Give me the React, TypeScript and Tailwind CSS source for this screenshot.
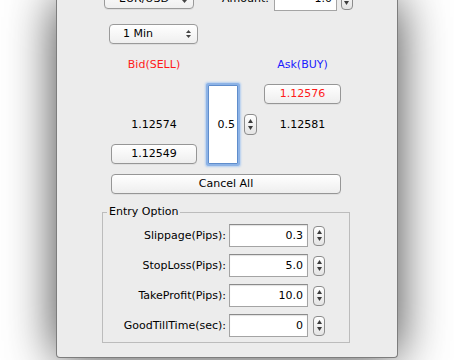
import React from "react";

const Stepper = ({ h = 20, w = 12 }: { h?: number; w?: number }) => (
  <div
    className="shrink-0 rounded-[4px] border border-[#8c8c8c] bg-gradient-to-b from-white to-[#e4e4e4] flex flex-col items-center justify-center gap-[3px]"
    style={{ width: w, height: h }}
  >
    <svg width="5" height="4" viewBox="0 0 5 4">
      <path d="M2.5 0 L5 4 L0 4Z" fill="#3c3c3c" />
    </svg>
    <svg width="5" height="4" viewBox="0 0 5 4">
      <path d="M0 0 L5 0 L2.5 4Z" fill="#3c3c3c" />
    </svg>
  </div>
);

const Combo = ({ label, w, pl }: { label: string; w: number; pl: number }) => (
  <div
    className="h-[20px] rounded-[4px] border border-[#9a9a9a] bg-gradient-to-b from-white to-[#efefef] flex items-center shadow-[0_1px_0_rgba(0,0,0,0.06)]"
    style={{ width: w }}
  >
    <span className="flex-1 leading-[14px]" style={{ paddingLeft: pl }}>
      {label}
    </span>
    <div className="flex flex-col items-center gap-[2px] mr-[6px]">
      <svg width="5" height="3" viewBox="0 0 5 3">
        <path d="M2.5 0 L5 3 L0 3Z" fill="#444" />
      </svg>
      <svg width="5" height="3" viewBox="0 0 5 3">
        <path d="M0 0 L5 0 L2.5 3Z" fill="#444" />
      </svg>
    </div>
  </div>
);

const Button = ({
  label,
  w,
  red,
}: {
  label: string;
  w: number;
  red?: boolean;
}) => (
  <div
    className={
      "h-[20px] rounded-[4px] border border-[#969696] bg-gradient-to-b from-white to-[#eeeeee] flex items-center justify-center leading-[14px] shadow-[0_1px_0_rgba(0,0,0,0.05)] " +
      (red ? "text-[#ff1a1a]" : "text-black")
    }
    style={{ width: w }}
  >
    {label}
  </div>
);

const Field = ({ value }: { value: string }) => (
  <div className="w-[79px] h-[23px] bg-white border border-[#a4a4a4] border-t-[#8a8a8a] shadow-[inset_0_1px_1px_rgba(0,0,0,0.12)] flex items-center justify-end pr-[4px] leading-[14px]">
    {value}
  </div>
);

const Row = ({ label, value }: { label: string; value: string }) => (
  <div className="flex items-center h-[23px]">
    <div className="w-[123px] text-right leading-[14px]">{label}</div>
    <div className="ml-[3px]">
      <Field value={value} />
    </div>
    <div className="ml-[5px]">
      <Stepper h={20} />
    </div>
  </div>
);

export default function App() {
  return (
    <div
      className="w-[454px] h-[360px] overflow-hidden bg-white text-[11px] text-black"
      style={{ fontFamily: '"DejaVu Sans", "Liberation Sans", sans-serif' }}
    >
      <div className="ml-[56px] w-[342px] h-[358px] bg-[#ececec] border border-t-0 border-[#7d7d7d] rounded-b-[4px] shadow-[0_0_50px_rgba(0,0,0,0.75)] flex flex-col">
        {/* top row (cut off) */}
        <div className="flex items-center h-[24px] -mt-[13px]">
          <div className="ml-[47px]">
            <Combo label="EUR/USD" w={90} pl={14} />
          </div>
          <div className="ml-[28px] leading-[14px]">Amount:</div>
          <div className="ml-[5px] w-[63px] h-[23px] bg-white border border-[#a4a4a4] flex items-center justify-end pr-[4px] leading-[14px]">
            1.0
          </div>
          <div className="ml-[4px]">
            <Stepper h={22} />
          </div>
        </div>

        {/* 1 Min */}
        <div className="flex mt-[13px]">
          <div className="ml-[52px]">
            <Combo label="1 Min" w={89} pl={13} />
          </div>
        </div>

        {/* Bid / Ask labels */}
        <div className="flex mt-[14px] h-[14px] leading-[14px]">
          <div className="ml-[54px] w-[86px] text-center text-[#ff1a1a]">Bid(SELL)</div>
          <div className="ml-[67px] w-[77px] text-center text-[#1a1aff]">Ask(BUY)</div>
        </div>

        {/* middle block */}
        <div className="flex mt-[10px] h-[85px]">
          <div className="ml-[54px] w-[86px] flex flex-col items-center">
            <div className="mt-[36px] h-[14px] leading-[14px]">1.12574</div>
            <div className="mt-[12px]">
              <Button label="1.12549" w={86} />
            </div>
          </div>
          <div className="ml-[11px] mt-[3px] w-[30px] h-[79px] bg-white border border-[#5f8dcc] shadow-[0_0_0_2px_#8db3e6,0_0_2px_3px_#b4cff0] rounded-[1px] flex items-center justify-end pr-[2px] leading-[14px]">
            0.5
          </div>
          <div className="ml-[6px] mt-[32px]">
            <Stepper h={21} w={13} />
          </div>
          <div className="ml-[7px] w-[77px] flex flex-col items-center">
            <div className="mt-[2px]">
              <Button label="1.12576" w={77} red />
            </div>
            <div className="mt-[14px] h-[14px] leading-[14px]">1.12581</div>
          </div>
        </div>

        {/* Cancel All */}
        <div className="flex mt-[7px]">
          <div className="ml-[54px]">
            <Button label="Cancel All" w={230} />
          </div>
        </div>

        {/* Entry Option group */}
        <fieldset className="ml-[45px] mt-[11px] w-[248px] border border-[#bcbcbc] pb-[5px]">
          <legend className="ml-[4px] px-[2px] leading-[14px]">Entry Option</legend>
          <div className="flex flex-col gap-[7px] mt-[5px]">
            <Row label="Slippage(Pips):" value="0.3" />
            <Row label="StopLoss(Pips):" value="5.0" />
            <Row label="TakeProfit(Pips):" value="10.0" />
            <Row label="GoodTillTime(sec):" value="0" />
          </div>
        </fieldset>
      </div>
    </div>
  );
}
